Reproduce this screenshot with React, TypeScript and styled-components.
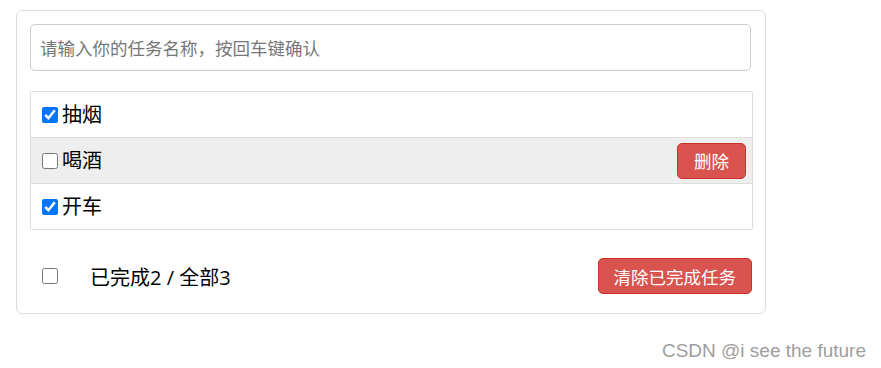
import React, { useState } from 'react';
import styled, { createGlobalStyle } from 'styled-components';

const GlobalStyle = createGlobalStyle`
  html, body {
    margin: 0;
    padding: 0;
    background: #fff;
  }
  body {
    font-family: 'Open Sans', 'Noto Sans CJK SC', sans-serif;
    color: #000;
  }
`;

const Page = styled.div`
  position: relative;
  width: 881px;
  height: 368px;
  padding: 10px 0 0 16px;
  box-sizing: border-box;
`;

const Panel = styled.div`
  width: 750px;
  box-sizing: border-box;
  border: 1px solid #ddd;
  border-radius: 6px;
  padding: 13px 14px 19px 13px;
`;

const TaskInput = styled.input`
  display: block;
  width: 721px;
  height: 47px;
  box-sizing: border-box;
  border: 1px solid #ccc;
  border-radius: 5px;
  padding: 0 9px;
  font-family: 'Open Sans', 'Noto Sans CJK SC', sans-serif;
  font-size: 17.5px;
  color: #333;
  outline: none;

  &::placeholder {
    color: #777;
  }
`;

const TaskList = styled.ul`
  list-style: none;
  margin: 20px 0 0;
  padding: 0;
  width: 721px;
  border: 1px solid #ddd;
  border-radius: 2px;
`;

const TaskRow = styled.li<{ $hover?: boolean }>`
  display: flex;
  align-items: center;
  height: 45px;
  padding: 0 6px 0 6px;
  background: ${p => (p.$hover ? '#eee' : '#fff')};
  border-bottom: 1px solid #ddd;

  &:last-child {
    border-bottom: none;
  }
`;

const TaskLabel = styled.label`
  display: flex;
  align-items: center;
  flex: 1;
  font-size: 20px;
  line-height: 1;
`;

const Check = styled.input`
  width: 16px;
  height: 16px;
  margin: 0 4px 0 5px;
`;

const DangerButton = styled.button<{ $wide?: boolean }>`
  height: 36px;
  padding: 0 ${p => (p.$wide ? '15px' : '16px')};
  background: #d9534f;
  border: 1px solid #c9302c;
  border-radius: 5px;
  color: #fff;
  font-family: 'Open Sans', 'Noto Sans CJK SC', sans-serif;
  font-size: 17.5px;
  cursor: pointer;
`;

const Footer = styled.div`
  display: flex;
  align-items: center;
  margin-top: 28px;
  height: 36px;
  width: 722px;
`;

const FooterCheck = styled.input`
  width: 16px;
  height: 16px;
  margin: 0 32px 0 12px;
`;

const Summary = styled.span`
  flex: 1;
  font-size: 20px;
`;

const Watermark = styled.div`
  position: absolute;
  right: 15px;
  top: 340px;
  font-family: 'Liberation Sans', Arial, sans-serif;
  font-size: 19px;
  color: #9e9e9e;
`;

const initial = [
  { id: 1, name: '抽烟', done: true },
  { id: 2, name: '喝酒', done: false },
  { id: 3, name: '开车', done: true },
];

export default function App() {
  const [todos, setTodos] = useState(initial);
  const doneCount = todos.filter(t => t.done).length;

  const toggle = (id: number) =>
    setTodos(todos.map(t => (t.id === id ? { ...t, done: !t.done } : t)));

  return (
    <Page>
      <GlobalStyle />
      <Panel>
        <TaskInput placeholder="请输入你的任务名称，按回车键确认" />
        <TaskList>
          {todos.map(t => (
            <TaskRow key={t.id} $hover={t.id === 2}>
              <TaskLabel>
                <Check type="checkbox" checked={t.done} onChange={() => toggle(t.id)} />
                <span>{t.name}</span>
              </TaskLabel>
              {t.id === 2 && <DangerButton>删除</DangerButton>}
            </TaskRow>
          ))}
        </TaskList>
        <Footer>
          <FooterCheck type="checkbox" checked={false} onChange={() => {}} />
          <Summary>已完成{doneCount} / 全部{todos.length}</Summary>
          <DangerButton $wide>清除已完成任务</DangerButton>
        </Footer>
      </Panel>
      <Watermark>CSDN @i see the future</Watermark>
    </Page>
  );
}
